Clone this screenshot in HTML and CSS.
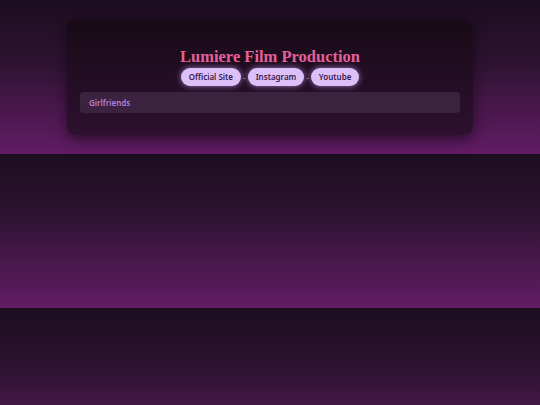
FILE: index.html
```html
<!DOCTYPE html>
<html>
<head>
<meta charset="utf-8">
<link rel="stylesheet" href="styles.css">
</head>
<body>
<div class="card">
  <h1 class="title">Lumiere Film Production</h1>
  <div class="links">
    <a class="pill" href="#">Official Site</a>
    <span class="sep">-</span>
    <a class="pill" href="#">Instagram</a>
    <span class="sep">-</span>
    <a class="pill" href="#">Youtube</a>
  </div>
  <div class="list">
    <div class="item">Girlfriends</div>
  </div>
</div>
</body>
</html>
```
FILE: styles.css
```css
html {
  background: linear-gradient(180deg, #1c0d1f 0%, #2e1332 40%, #621c64 100%);
}
body {
  margin: 0;
  padding: 20px 0 19px;
  font-family: "Noto Sans", sans-serif;
}
.card {
  width: 406px;
  margin: 0 auto;
  box-sizing: border-box;
  padding: 27px 13px 22px;
  background: linear-gradient(180deg, #170b16 0%, #2e1030 100%);
  border-radius: 8px;
  box-shadow: 0 4px 14px rgba(10, 0, 12, 0.55);
}
.title {
  margin: 0;
  text-align: center;
  font-family: "Liberation Serif", serif;
  font-weight: 700;
  font-size: 16.5px;
  line-height: 19px;
  color: #e3609a;
}
.links {
  display: flex;
  justify-content: center;
  align-items: center;
  gap: 2px;
  margin-top: 2px;
}
.pill {
  display: block;
  height: 18px;
  line-height: 18px;
  padding: 0 8px;
  border-radius: 9px;
  background: #dcc0f7;
  color: #3b1a4b;
  font-size: 8px;
  font-weight: 600;
  text-decoration: none;
  box-shadow: 0 0 6px rgba(210, 160, 255, 0.7);
}
.sep {
  color: #a58cb0;
  font-size: 8px;
}
.list {
  margin-top: 6px;
}
.item {
  height: 21px;
  line-height: 21px;
  padding: 0 9px;
  border-radius: 4px;
  background: #3b2340;
  color: #b77fd6;
  font-size: 8px;
  font-weight: 600;
}
```
